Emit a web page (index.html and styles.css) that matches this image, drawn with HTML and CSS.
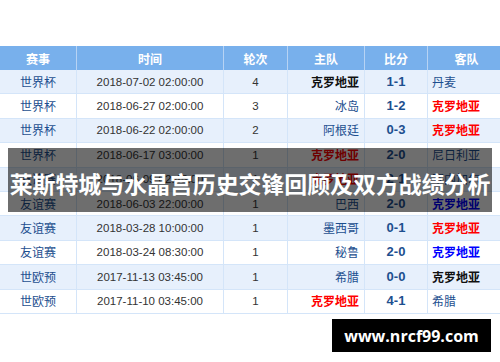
FILE: index.html
```html
<!DOCTYPE html>
<html>
<head>
<meta charset="utf-8">
<link rel="stylesheet" href="styles.css">
</head>
<body>
<div class="page">
  <table class="record">
    <thead>
      <tr>
        <th class="c-comp">赛事</th>
        <th class="c-time">时间</th>
        <th class="c-round">轮次</th>
        <th class="c-home">主队</th>
        <th class="c-score">比分</th>
        <th class="c-away">客队</th>
      </tr>
    </thead>
    <tbody>
      <tr class="odd">
        <td class="comp">世界杯</td><td class="time">2018-07-02 02:00:00</td><td class="round">4</td>
        <td class="home"><span class="t-black">克罗地亚</span></td><td class="score">1-1</td><td class="away"><span class="t-team">丹麦</span></td>
      </tr>
      <tr>
        <td class="comp">世界杯</td><td class="time">2018-06-27 02:00:00</td><td class="round">3</td>
        <td class="home"><span class="t-team">冰岛</span></td><td class="score">1-2</td><td class="away"><span class="t-red">克罗地亚</span></td>
      </tr>
      <tr class="odd">
        <td class="comp">世界杯</td><td class="time">2018-06-22 02:00:00</td><td class="round">2</td>
        <td class="home"><span class="t-team">阿根廷</span></td><td class="score">0-3</td><td class="away"><span class="t-red">克罗地亚</span></td>
      </tr>
      <tr>
        <td class="comp">世界杯</td><td class="time">2018-06-17 03:00:00</td><td class="round">1</td>
        <td class="home"><span class="t-red">克罗地亚</span></td><td class="score">2-0</td><td class="away"><span class="t-team">尼日利亚</span></td>
      </tr>
      <tr class="odd">
        <td class="comp">友谊赛</td><td class="time">2018-06-09 02:45:00</td><td class="round">1</td>
        <td class="home"><span class="t-red">克罗地亚</span></td><td class="score">2-1</td><td class="away"><span class="t-team">塞内加尔</span></td>
      </tr>
      <tr>
        <td class="comp">友谊赛</td><td class="time">2018-06-03 22:00:00</td><td class="round">1</td>
        <td class="home"><span class="t-team">巴西</span></td><td class="score">2-0</td><td class="away"><span class="t-blue">克罗地亚</span></td>
      </tr>
      <tr class="odd">
        <td class="comp">友谊赛</td><td class="time">2018-03-28 10:00:00</td><td class="round">1</td>
        <td class="home"><span class="t-team">墨西哥</span></td><td class="score">0-1</td><td class="away"><span class="t-red">克罗地亚</span></td>
      </tr>
      <tr>
        <td class="comp">友谊赛</td><td class="time">2018-03-24 08:30:00</td><td class="round">1</td>
        <td class="home"><span class="t-team">秘鲁</span></td><td class="score">2-0</td><td class="away"><span class="t-blue">克罗地亚</span></td>
      </tr>
      <tr class="odd">
        <td class="comp">世欧预</td><td class="time">2017-11-13 03:45:00</td><td class="round">1</td>
        <td class="home"><span class="t-team">希腊</span></td><td class="score">0-0</td><td class="away"><span class="t-black">克罗地亚</span></td>
      </tr>
      <tr>
        <td class="comp">世欧预</td><td class="time">2017-11-10 03:45:00</td><td class="round">1</td>
        <td class="home"><span class="t-red">克罗地亚</span></td><td class="score">4-1</td><td class="away"><span class="t-team">希腊</span></td>
      </tr>
    </tbody>
  </table>

  <div class="banner"><h1 class="banner-title">莱斯特城与水晶宫历史交锋回顾及双方战绩分析</h1></div>
  <div class="site-badge">www.nrcf99.com</div>
</div>
</body>
</html>
```

FILE: styles.css
```css
html, body {
  margin: 0;
  padding: 0;
  background: #ffffff;
}

.page {
  position: relative;
  width: 500px;
  height: 362px;
  padding-top: 46px;
  box-sizing: border-box;
  font-family: "Noto Sans CJK SC", "Liberation Sans", sans-serif;
}

.record {
  width: 500px;
  border-collapse: collapse;
  table-layout: fixed;
  font-size: 12px;
}

.record th {
  height: 24px;
  padding: 0;
  background: #78b0ec;
  color: #ffffff;
  font-weight: 700;
  font-size: 12px;
  border-left: 1px solid #b7d3f4;
  text-align: center;
}

.record th:first-child { border-left: none; }

.c-comp { width: 76px; }
.c-time { width: 146px; }
.c-round { width: 63px; }
.c-home { width: 76px; }
.c-score { width: 62px; }
.c-away { width: 77px; }

.record td {
  height: 23.4px;
  padding: 0;
  border-left: 1px solid #d4e5f9;
  border-bottom: 1px solid #d4e5f9;
  line-height: 16px;
  white-space: nowrap;
  overflow: hidden;
}

.record td:first-child { border-left: none; }

.record tr.odd td { background: #e7f0fc; }

.comp {
  text-align: center;
  color: #1d4f8f;
}

.time {
  text-align: center;
  color: #333333;
  font-family: "Liberation Sans", sans-serif;
  font-size: 11.5px;
}

.round {
  text-align: center;
  color: #333333;
  font-family: "Liberation Sans", sans-serif;
  font-size: 11.5px;
}

.home {
  text-align: right;
  padding-right: 5px !important;
}

.away {
  text-align: left;
  padding-left: 4px !important;
}

.score {
  text-align: center;
  color: #1d4f8f;
  font-weight: 700;
  font-family: "Liberation Sans", sans-serif;
  font-size: 13px;
}

.t-team { color: #1d4f8f; }
.t-black { color: #111111; font-weight: 700; }
.t-red { color: #ff0000; font-weight: 700; }
.t-blue { color: #0000ff; font-weight: 700; }

.banner {
  position: absolute;
  left: 8px;
  top: 148px;
  width: 484px;
  height: 64px;
  background: rgba(0, 0, 0, 0.57);
  display: flex;
  align-items: center;
  justify-content: center;
  padding-top: 6px;
  box-sizing: border-box;
}

.banner-title {
  margin: 0;
  color: #ffffff;
  font-size: 22.9px;
  font-weight: 700;
  line-height: 30px;
  letter-spacing: 0;
  white-space: nowrap;
  font-family: "Noto Sans CJK SC", sans-serif;
}

.site-badge {
  position: absolute;
  left: 332px;
  top: 319px;
  width: 159px;
  height: 33px;
  background: #000000;
  color: #ffffff;
  font-family: "Open Sans", "DejaVu Sans", sans-serif;
  font-weight: 700;
  font-size: 16px;
  display: flex;
  align-items: center;
  justify-content: center;
}
```
